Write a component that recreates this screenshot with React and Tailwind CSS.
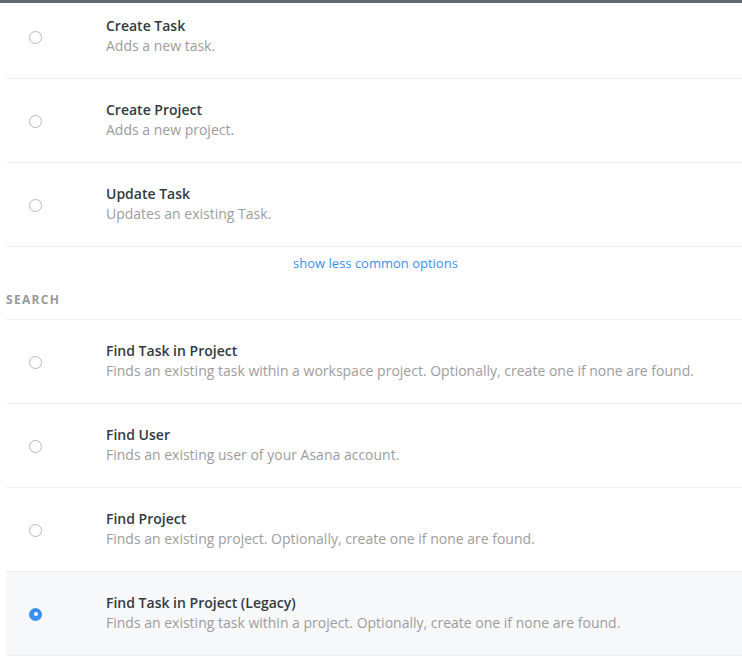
const actions = [
  { title: 'Create Task', desc: 'Adds a new task.', first: true },
  { title: 'Create Project', desc: 'Adds a new project.' },
  { title: 'Update Task', desc: 'Updates an existing Task.' },
];

const searches = [
  { title: 'Find Task in Project', desc: 'Finds an existing task within a workspace project. Optionally, create one if none are found.' },
  { title: 'Find User', desc: 'Finds an existing user of your Asana account.' },
  { title: 'Find Project', desc: 'Finds an existing project. Optionally, create one if none are found.' },
  { title: 'Find Task in Project (Legacy)', desc: 'Finds an existing task within a project. Optionally, create one if none are found.', selected: true },
];

function Radio({ checked }) {
  if (checked) {
    return (
      <span className="flex h-[13px] w-[13px] items-center justify-center rounded-full bg-[#3b8ff2]">
        <span className="h-[4px] w-[4px] rounded-full bg-white" />
      </span>
    );
  }
  return <span className="block h-[13px] w-[13px] rounded-full border border-[#b8b8b8] bg-white" />;
}

function Row({ item }) {
  return (
    <div
      className={`flex items-center border-b border-[#eeeeee] ${item.first ? 'pt-[13px]' : 'pt-[21px]'} pb-[22px] ${item.selected ? 'bg-[#f7f8fa]' : ''}`}
    >
      <div className="mt-[2px] flex w-[100px] justify-start pl-[23px]">
        <Radio checked={item.selected} />
      </div>
      <div className="flex flex-col">
        <span className="text-[14px] leading-[20px] font-semibold text-[#333a42]">{item.title}</span>
        <span className="text-[14px] leading-[20px] text-[#9d9d9d]">{item.desc}</span>
      </div>
    </div>
  );
}

export default function App() {
  return (
    <div className="h-[656px] w-[742px] overflow-hidden bg-white" style={{ fontFamily: '"Open Sans", sans-serif' }}>
      <div className="h-[3px] bg-[#5e6b72]" />
      <div className="ml-[6px]">
        {actions.map((a) => (
          <Row key={a.title} item={a} />
        ))}
        <div className="flex justify-center pt-[6px] pl-[3px]">
          <span className="text-[13px] leading-[20px] text-[#3d8ff0]">show less common options</span>
        </div>
        <div className="border-b border-[#eeeeee] pt-[13px] pb-[9px]">
          <span className="text-[12px] leading-[18px] font-bold tracking-[0.11em] text-[#999999]">SEARCH</span>
        </div>
        {searches.map((s) => (
          <Row key={s.title} item={s} />
        ))}
      </div>
    </div>
  );
}
